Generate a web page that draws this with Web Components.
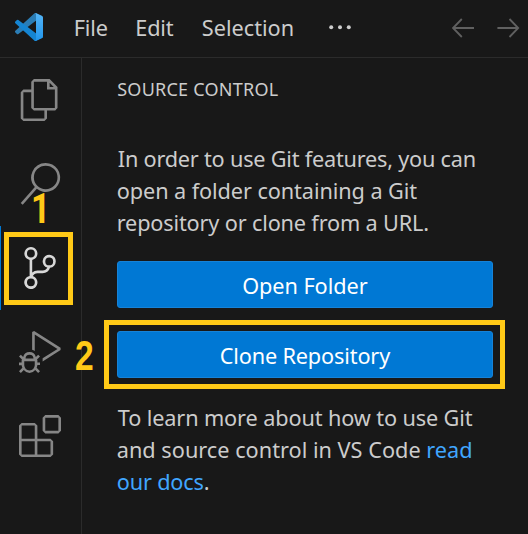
<!DOCTYPE html>
<html lang="en">
<head>
<meta charset="utf-8">
<title>Source Control</title>
<style>
html, body { margin: 0; height: 100%; background: #181818; overflow: hidden; }
</style>
</head>
<body>
<editor-window></editor-window>
<script>
const define = (name, html, setup) => {
  const t = document.createElement('template');
  t.innerHTML = html;
  customElements.define(name, class extends HTMLElement {
    constructor() { super(); this.attachShadow({ mode: 'open' }).append(t.content.cloneNode(true)); }
    connectedCallback() { if (setup) setup(this, this.shadowRoot); }
  });
};

// One line of interface text, tracked so its glyphs span the width in "ink".
define('ui-line', `<style>
:host { display: block; white-space: pre; height: var(--line, 32px); line-height: var(--line, 32px); }
span { display: inline-block; }
</style><span><slot></slot></span>`, (el, root) => {
  const cs = getComputedStyle(el), text = el.textContent;
  const ctx = document.createElement('canvas').getContext('2d');
  ctx.font = `${cs.fontWeight} ${cs.fontSize} ${cs.fontFamily}`;
  const m = ctx.measureText(text);
  const natural = m.actualBoundingBoxRight + m.actualBoundingBoxLeft;
  const span = root.querySelector('span');
  span.style.letterSpacing = (Number(el.getAttribute('ink')) - natural) / (text.length - 1) + 'px';
  span.style.marginLeft = m.actualBoundingBoxLeft + 0.75 + 'px';
});

define('product-logo', `<style>:host { display: block; width: 28px; height: 28px; } svg { display: block; }</style>
<svg width="28" height="28" viewBox="0 0 100 100"><defs><linearGradient id="g" x2="0" y2="1"><stop stop-color="#55b5f6"/><stop offset="1" stop-color="#2196ec"/></linearGradient></defs>
<path fill="#2b7db5" d="M96.46 10.8 75.86.88A6.25 6.25 0 0 0 68.75 2.08L1.3 63.58a4.17 4.17 0 0 0 0 6.17l5.51 5a4.17 4.17 0 0 0 5.32.24L93.36 13.37A4.13 4.13 0 0 1 100 16.67v-.24a6.25 6.25 0 0 0-3.54-5.63Z"/>
<path fill="#1585d2" d="M96.46 89.2 75.86 99.12a6.25 6.25 0 0 1-7.11-1.2L1.3 36.42a4.17 4.17 0 0 1 0-6.17l5.51-5a4.17 4.17 0 0 1 5.32-.24l81.23 61.62A4.13 4.13 0 0 0 100 83.33v.24a6.25 6.25 0 0 1-3.54 5.63Z"/>
<path fill="url(#g)" d="M75.86 99.13a6.25 6.25 0 0 1-7.11-1.21C71.06 100.22 75 98.59 75 95.33V4.67C75 1.41 71.06-.22 68.75 2.08A6.25 6.25 0 0 1 75.86.87l20.6 9.91A6.25 6.25 0 0 1 100 16.41v67.18a6.25 6.25 0 0 1-3.54 5.63Z"/></svg>`);

define('title-bar', `<style>
:host { box-sizing: border-box; height: 58px; display: grid; grid-template-columns: 60px 61.5px 65.5px 127px 123px 45px 23px; align-items: start; border-bottom: 1px solid #2b2b2b; padding-left: 15px; color: #ccc; --line: 32px; font-size: 21.7px; }
product-logo { margin-top: 13px; }
ui-line { margin-top: 12px; }
svg { display: block; margin-top: 18px; }
</style>
<product-logo></product-logo>
<ui-line ink="32">File</ui-line><ui-line ink="36.5">Edit</ui-line><ui-line ink="90">Selection</ui-line>
<svg width="22" height="20" fill="#ccc"><circle cx="2.2" cy="9.2" r="2"/><circle cx="11" cy="9.2" r="2"/><circle cx="19.8" cy="9.2" r="2"/></svg>
<svg width="23" height="20" fill="none" stroke="#606060" stroke-width="1.8"><path d="M9.8 1 1.1 10l8.7 9M1.1 10H22"/></svg>
<svg width="23" height="20" fill="none" stroke="#606060" stroke-width="1.8"><path d="m12.5 1 8.7 9-8.7 9M21.2 10H.4"/></svg>`);

const ICONS = {
  files: 'M17.5 0h-9L7 1.5V6H2.5L1 7.5v15.07L2.5 24h12.07L16 22.57V18h4.7l1.3-1.43V4.5L17.5 0zm0 2.12l2.38 2.38H17.5V2.12zm-3 20.38h-12v-15H7v9.07L8.5 18h6v4.5zm6-6h-12v-15H16V6h4.5v10.5z',
  search: 'M15.25 0a8.25 8.25 0 0 0-6.18 13.72L1 22.88l1.12 1 8.05-9.12A8.251 8.251 0 1 0 15.25.01V0zm0 15a6.75 6.75 0 1 1 0-13.5 6.75 6.75 0 0 1 0 13.5z',
  branch: 'M21.007 8.222A3.738 3.738 0 0 0 15.045 5.2a3.737 3.737 0 0 0 1.156 6.583 2.988 2.988 0 0 1-2.668 1.67h-2.99a4.456 4.456 0 0 0-2.989 1.165V7.4a3.737 3.737 0 1 0-1.494 0v9.117a3.776 3.776 0 1 0 1.816.099 2.99 2.99 0 0 1 2.668-1.667h2.99a4.484 4.484 0 0 0 4.223-3.039 3.736 3.736 0 0 0 3.25-3.687zM4.565 3.738a2.242 2.242 0 1 1 4.484 0 2.242 2.242 0 0 1-4.484 0zm4.484 16.441a2.242 2.242 0 1 1-4.484 0 2.242 2.242 0 0 1 4.484 0zm8.221-9.715a2.242 2.242 0 1 1 0-4.485 2.242 2.242 0 0 1 0 4.485z',
  debug: 'M10.94 13.5l-1.32 1.32a3.73 3.73 0 0 0-7.24 0L1.06 13.5 0 14.56l1.72 1.72-.22.22V18H0v1.5h1.5v.08c.077.489.214.966.41 1.42L0 22.94 1.06 24l1.65-1.65A4.308 4.308 0 0 0 6 24a4.31 4.31 0 0 0 3.29-1.65L10.94 24 12 22.94 10.09 21c.198-.464.336-.951.41-1.45v-.1H12V18h-1.5v-1.5l-.22-.22L12 14.56l-1.06-1.06zM6 13.5a2.25 2.25 0 0 1 2.25 2.25h-4.5A2.25 2.25 0 0 1 6 13.5zm3 6a3.33 3.33 0 0 1-3 3 3.33 3.33 0 0 1-3-3v-2.25h6v2.25zm14.76-9.9v1.26L13.5 17.37V15.6l8.5-5.37L9 2v9.46a5.07 5.07 0 0 0-1.5-.72V.63L8.64 0l15.12 9.6z',
  extensions: 'M13.5 1.5L15 0h7.5L24 1.5V9l-1.5 1.5H15L13.5 9V1.5zm1.5 0V9h7.5V1.5H15zM0 15V6l1.5-1.5H9L10.5 6v7.5H18l1.5 1.5v7.5L18 24H1.5L0 22.5V15zm9-1.5V6H1.5v7.5H9zM9 15H1.5v7.5H9V15zm1.5 7.5H18V15h-7.5v7.5z'
};
define('activity-item', `<style>
:host { box-sizing: border-box; display: block; height: 84px; padding: 21px 0 0 19px; color: #868686; }
:host([active]) { color: #d7d7d7; box-shadow: inset 1px 0 #0078d4; }
svg { display: block; fill: currentColor; }
</style><svg width="42" height="42" viewBox="0 0 24 24"><path/></svg>`,
(el, root) => root.querySelector('path').setAttribute('d', ICONS[el.getAttribute('icon')]));

define('activity-bar', `<style>:host { display: flex; flex-direction: column; border-right: 1px solid #2b2b2b; }</style>
<activity-item icon="files"></activity-item><activity-item icon="search"></activity-item><activity-item icon="branch" active></activity-item><activity-item icon="debug"></activity-item><activity-item icon="extensions"></activity-item>`);

define('action-button', `<style>
:host { box-sizing: border-box; height: 47px; border: 1px solid #1683d8; border-radius: 3px; background: #0078d4; color: #fff; display: flex; justify-content: center; padding: 8px 0 0; }
</style><slot></slot>`);

define('source-panel', `<style>
:host { display: flex; flex-direction: column; padding: 16px 35px 0; color: #ccc; }
.caption { font-size: 18px; --line: 30px; margin-left: -.5px; }
.intro { margin: 39px 0 22px; }
.actions { display: grid; row-gap: 23px; }
.more { margin-top: 24px; }
a { color: #40a6ff; }
</style>
<ui-line class="caption" ink="160.5">SOURCE CONTROL</ui-line>
<div class="intro"><ui-line ink="357">In order to use Git features, you can</ui-line><ui-line ink="299.5">open a folder containing a Git</ui-line><ui-line ink="310.5">repository or clone from a URL.</ui-line></div>
<div class="actions"><action-button><ui-line ink="124.5">Open Folder</ui-line></action-button><action-button><ui-line ink="170.5">Clone Repository</ui-line></action-button></div>
<div class="more"><ui-line ink="355">To learn more about how to use Git</ui-line><ui-line ink="353.5">and source control in VS Code <a>read</a></ui-line><ui-line ink="91"><a>our docs</a>.</ui-line></div>`);

define('callout-box', `<style>:host { position: absolute; box-sizing: border-box; border: 5px solid #ffc917; }</style>`);
define('callout-number', `<style>:host { position: absolute; font: bold 42px/42px var(--face, "Liberation Sans"), sans-serif; color: #ffc917; transform: scaleX(.8); transform-origin: 0 0; }</style><slot></slot>`);

define('editor-window', `<style>
:host { position: relative; display: grid; grid-template: 58px 1fr / 82px 1fr; width: 528px; height: 534px; overflow: hidden; background: #181818; font: 21.7px "Noto Sans", "Open Sans", sans-serif; }
title-bar { grid-column: 1 / -1; }
.b1 { left: 4px; top: 232px; width: 69px; height: 73px; }
.b2 { left: 104px; top: 320px; width: 401px; height: 69px; }
.n1 { left: 31px; top: 188px; --face: Roboto; }
.n2 { left: 75px; top: 335px; }
</style>
<title-bar></title-bar><activity-bar></activity-bar><source-panel></source-panel>
<callout-box class="b1"></callout-box><callout-number class="n1">1</callout-number>
<callout-box class="b2"></callout-box><callout-number class="n2">2</callout-number>`);
</script>
</body>
</html>
